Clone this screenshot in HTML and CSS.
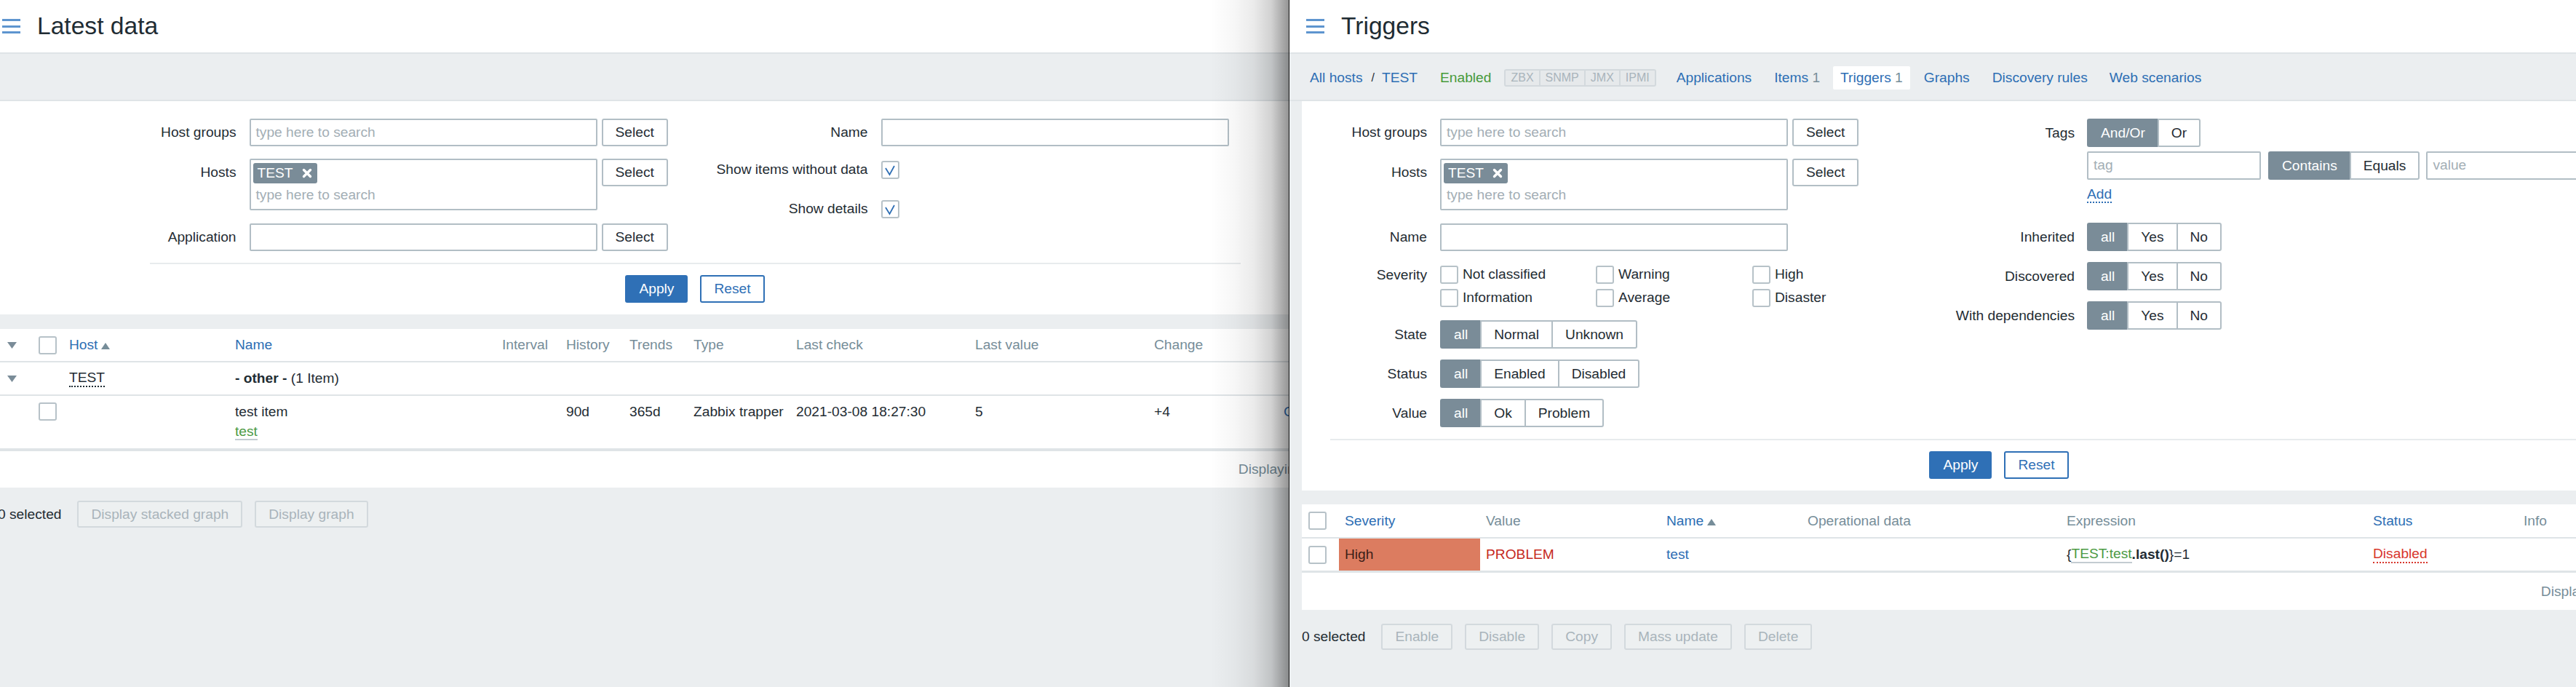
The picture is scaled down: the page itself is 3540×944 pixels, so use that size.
FILE: index.html
```html
<!DOCTYPE html>
<html>
<head>
<meta charset="utf-8">
<title>Zabbix</title>
<link rel="stylesheet" href="styles.css">
</head>
<body>
<div class="screen">
  <div class="win win-left">
    <div class="page page-left">
      <header class="head"><span class="burger"><i></i><i></i><i></i></span><h1>Latest data</h1></header>
      <div class="band"></div>
      <section class="filter">
        <div class="fform fform-l">
          <div class="fcols">
            <div class="fcol lcol1">
              <div class="frow"><div class="lbl">Host groups</div><div class="inp ph">type here to search</div><span class="btn">Select</span></div>
              <div class="frow mt17"><div class="lbl">Hosts</div><div class="multi"><span class="chip">TEST<svg width="14" height="14" viewBox="0 0 14 14"><path d="M2.5 2.5L11.5 11.5M11.5 2.5L2.5 11.5" stroke="#fff" stroke-width="3.4" stroke-linecap="round"/></svg></span><div class="ph mph">type here to search</div></div><span class="btn">Select</span></div>
              <div class="frow mt18"><div class="lbl">Application</div><div class="inp"></div><span class="btn">Select</span></div>
            </div>
            <div class="fcol lcol2">
              <div class="frow"><div class="lbl">Name</div><div class="inp"></div></div>
              <div class="frow frow-cb mt17"><div class="lbl">Show items without data</div><span class="cb"><svg width="21" height="21" viewBox="0 0 21 21"><polyline points="4,8 9.5,17 16,5" fill="none" stroke="#2d6eb4" stroke-width="1.8"/></svg></span></div>
              <div class="frow frow-cb mt24"><div class="lbl">Show details</div><span class="cb"><svg width="21" height="21" viewBox="0 0 21 21"><polyline points="4,8 9.5,17 16,5" fill="none" stroke="#2d6eb4" stroke-width="1.8"/></svg></span></div>
            </div>
          </div>
          <div class="fsep"></div>
          <div class="fbtns"><span class="btn btn-primary">Apply</span><span class="btn btn-outline">Reset</span></div>
        </div>
      </section>

      <div class="tbl tbl-l">
        <div class="tr th">
          <div class="tc tc-arrow"><svg width="13" height="9" viewBox="0 0 13 9"><polygon points="0,0 13,0 6.5,9" fill="#7a8c98"/></svg></div>
          <div class="tc"><span class="cb"></span></div>
          <div class="tc link">Host<svg class="sort" width="12" height="9" viewBox="0 0 12 9"><polygon points="0,9 6,0 12,9" fill="#768d99"/></svg></div>
          <div class="tc link">Name</div>
          <div class="tc">Interval</div>
          <div class="tc">History</div>
          <div class="tc">Trends</div>
          <div class="tc">Type</div>
          <div class="tc">Last check</div>
          <div class="tc">Last value</div>
          <div class="tc">Change</div>
          <div class="tc"></div>
        </div>
        <div class="tr tgroup">
          <div class="tc tc-arrow"><svg width="13" height="9" viewBox="0 0 13 9"><polygon points="0,0 13,0 6.5,9" fill="#7a8c98"/></svg></div>
          <div class="tc"></div>
          <div class="tc"><span class="dotted">TEST</span></div>
          <div class="tc"><b>- other -</b>&nbsp;(1 Item)</div>
          <div class="tc"></div><div class="tc"></div><div class="tc"></div><div class="tc"></div>
          <div class="tc"></div><div class="tc"></div><div class="tc"></div><div class="tc"></div>
        </div>
        <div class="tr titem">
          <div class="tc"></div>
          <div class="tc tc-cb"><span class="cb"></span></div>
          <div class="tc"></div>
          <div class="tc tc-name"><span>test item</span><span class="app">test</span></div>
          <div class="tc"></div>
          <div class="tc">90d</div>
          <div class="tc">365d</div>
          <div class="tc">Zabbix trapper</div>
          <div class="tc">2021-03-08 18:27:30</div>
          <div class="tc">5</div>
          <div class="tc">+4</div>
          <div class="tc link">Graph</div>
        </div>
        <div class="tfoot">Displaying 1 of 1 found</div>
      </div>

      <div class="actions">
        <span class="sel">0 selected</span>
        <span class="btn btn-dis">Display stacked graph</span>
        <span class="btn btn-dis">Display graph</span>
      </div>
    </div>
    <div class="shade"></div>
  </div>

  <div class="divider"></div>

  <div class="win win-right">
    <div class="page page-right">
      <header class="head"><span class="burger"><i></i><i></i><i></i></span><h1>Triggers</h1></header>
      <div class="band">
        <nav class="nav">
          <span class="link">All hosts</span>
          <span class="crumb-sep">/</span>
          <span class="link crumb-host">TEST</span>
          <span class="green nav-status">Enabled</span>
          <span class="avail"><span>ZBX</span><span>SNMP</span><span>JMX</span><span>IPMI</span></span>
          <span class="link nav-apps">Applications</span>
          <span class="link nav-item">Items <span class="cnt">1</span></span>
          <span class="link nav-tab">Triggers <span class="cnt">1</span></span>
          <span class="link nav-graphs">Graphs</span>
          <span class="link nav-item">Discovery rules</span>
          <span class="link nav-web">Web scenarios</span>
        </nav>
      </div>
      <section class="filter">
        <div class="fform fform-r">
          <div class="fcols">
            <div class="fcol rcol1">
              <div class="frow"><div class="lbl">Host groups</div><div class="inp ph">type here to search</div><span class="btn">Select</span></div>
              <div class="frow mt17"><div class="lbl">Hosts</div><div class="multi"><span class="chip">TEST<svg width="14" height="14" viewBox="0 0 14 14"><path d="M2.5 2.5L11.5 11.5M11.5 2.5L2.5 11.5" stroke="#fff" stroke-width="3.4" stroke-linecap="round"/></svg></span><div class="ph mph">type here to search</div></div><span class="btn">Select</span></div>
              <div class="frow mt18"><div class="lbl">Name</div><div class="inp"></div></div>
              <div class="frow mt19"><div class="lbl lbl-sev">Severity</div>
                <div class="sevgrid">
                  <span class="cbl"><span class="cb"></span>Not classified</span>
                  <span class="cbl"><span class="cb"></span>Warning</span>
                  <span class="cbl"><span class="cb"></span>High</span>
                  <span class="cbl"><span class="cb"></span>Information</span>
                  <span class="cbl"><span class="cb"></span>Average</span>
                  <span class="cbl"><span class="cb"></span>Disaster</span>
                </div>
              </div>
              <div class="frow mt18"><div class="lbl lbl-seg">State</div><div class="seg"><span class="on">all</span><span>Normal</span><span>Unknown</span></div></div>
              <div class="frow mt15"><div class="lbl lbl-seg">Status</div><div class="seg"><span class="on">all</span><span>Enabled</span><span>Disabled</span></div></div>
              <div class="frow mt15"><div class="lbl lbl-seg">Value</div><div class="seg"><span class="on">all</span><span>Ok</span><span>Problem</span></div></div>
            </div>
            <div class="fcol rcol2">
              <div class="frow"><div class="lbl lbl-seg">Tags</div><div class="seg"><span class="on">And/Or</span><span>Or</span></div></div>
              <div class="frow mt6"><div class="lbl lbl-seg"></div><div class="inp inp-sm ph">tag</div><div class="seg seg-op"><span class="on">Contains</span><span>Equals</span></div><div class="inp inp-sm inp-val ph">value</div></div>
              <div class="frow mt10"><div class="lbl lbl-add"></div><span class="add">Add</span></div>
              <div class="frow mt27"><div class="lbl lbl-seg">Inherited</div><div class="seg"><span class="on">all</span><span>Yes</span><span>No</span></div></div>
              <div class="frow mt15"><div class="lbl lbl-seg">Discovered</div><div class="seg"><span class="on">all</span><span>Yes</span><span>No</span></div></div>
              <div class="frow mt15"><div class="lbl lbl-seg">With dependencies</div><div class="seg"><span class="on">all</span><span>Yes</span><span>No</span></div></div>
            </div>
          </div>
          <div class="fsep"></div>
          <div class="fbtns"><span class="btn btn-primary">Apply</span><span class="btn btn-outline">Reset</span></div>
        </div>
      </section>

      <div class="tbl tbl-r">
        <div class="tr th">
          <div class="tc tc-first"><span class="cb"></span></div>
          <div class="tc link">Severity</div>
          <div class="tc">Value</div>
          <div class="tc link">Name<svg class="sort" width="12" height="9" viewBox="0 0 12 9"><polygon points="0,9 6,0 12,9" fill="#768d99"/></svg></div>
          <div class="tc">Operational data</div>
          <div class="tc">Expression</div>
          <div class="tc link">Status</div>
          <div class="tc">Info</div>
        </div>
        <div class="tr tdata">
          <div class="tc tc-first"><span class="cb"></span></div>
          <div class="tc sev-high">High</div>
          <div class="tc problem">PROBLEM</div>
          <div class="tc link">test</div>
          <div class="tc"></div>
          <div class="tc">{<span class="expr-host">TEST:test</span><b>.last()</b>}=1</div>
          <div class="tc"><span class="dis">Disabled</span></div>
          <div class="tc"></div>
        </div>
        <div class="tfoot tfoot-r">Displaying 1 of 1 found</div>
      </div>

      <div class="actions actions-r">
        <span class="sel">0 selected</span>
        <span class="btn btn-dis">Enable</span>
        <span class="btn btn-dis">Disable</span>
        <span class="btn btn-dis">Copy</span>
        <span class="btn btn-dis">Mass update</span>
        <span class="btn btn-dis">Delete</span>
      </div>
    </div>
  </div>
</div>
</body>
</html>
```

FILE: styles.css
```css
* { box-sizing: border-box; }
html, body { margin: 0; padding: 0; }
body {
  width: 3540px; height: 944px; overflow: hidden;
  font-family: "Liberation Sans", Arial, sans-serif;
  font-size: 19.2px; color: #1f2c33; background: #ebeef0;
}
.screen { display: flex; width: 3540px; height: 944px; }
.win { position: relative; height: 944px; overflow: hidden; background: #ebeef0; flex: none; }
.win-left { width: 1771px; }
.win-right { width: 1768px; }
.divider { width: 1px; flex: none; background: #111; }
.page { width: 1950px; flex: none; }
.page-left { margin-left: -20px; }

.shade {
  position: absolute; top: 0; right: 0; width: 108px; height: 944px;
  background: linear-gradient(to right, rgba(0,0,0,0) 0%, rgba(0,0,0,0.03) 30%, rgba(0,0,0,0.08) 55%, rgba(0,0,0,0.18) 78%, rgba(0,0,0,0.42) 100%);
}

/* header */
.head { height: 74px; background: #fff; display: flex; align-items: center; padding-left: 23px; border-bottom: 2px solid #dfe4e7; }
.burger { width: 25px; height: 20px; display: flex; flex-direction: column; justify-content: space-between; margin-right: 23px; }
.burger i { display: block; height: 3px; background: #5e95cf; }
.head h1 { margin: 0; font-size: 33.6px; font-weight: normal; line-height: 1; color: #1f2c33; }

.band { height: 65px; border-bottom: 2px solid #dfe4e7; }

/* nav */
.nav { display: flex; align-items: center; height: 63px; padding-left: 28px; padding-top: 3px; white-space: nowrap; }
.link { color: #2d6eb4; }
.green { color: #479a3a; }
.cnt { color: #768d99; }
.crumb-sep { color: #1f2c33; margin-left: 12px; font-size: 16px; }
.crumb-host { margin-left: 10px; }
.nav-status { margin-left: 31px; }
.avail { display: flex; margin-left: 18px; height: 24px; border: 2px solid #d3d9dd; border-radius: 3px; background: #e6e9eb; font-size: 16px; color: #a9b4bb; }
.avail span { padding: 0 7px; line-height: 20px; border-left: 2px solid #d3d9dd; }
.avail span:first-child { border-left: 0; }
.nav-apps { margin-left: 28px; }
.nav-item { margin-left: 31px; }
.nav-tab { margin-left: 18px; padding: 0 10px; height: 32px; line-height: 32px; background: #fff; border-radius: 2px; }
.nav-graphs { margin-left: 19px; }
.nav-web { margin-left: 30px; }

/* filter */
.filter { background: #fff; margin: 0 17px; padding: 24px 0 16px; }
.fform-l { width: 1499px; margin: 0 auto; }
.fform-r { width: 1838px; margin: 0 auto; }
.fcols { display: flex; align-items: flex-start; }
.lcol1 { width: 749px; }
.lcol2 { flex: 1; }
.rcol1 { width: 828px; }
.rcol2 { flex: 1; }
.frow { display: flex; align-items: flex-start; }
.mt6 { margin-top: 6px; } .mt10 { margin-top: 10px; } .mt15 { margin-top: 15px; }
.mt17 { margin-top: 17px; } .mt18 { margin-top: 18px; } .mt19 { margin-top: 19px; }
.mt24 { margin-top: 24px; } .mt27 { margin-top: 27px; }
.lbl { flex: none; text-align: right; padding-right: 18px; line-height: 38px; white-space: nowrap; }
.lcol1 .lbl { width: 137px; }
.lcol2 .lbl { width: 256px; }
.rcol1 .lbl { width: 151px; }
.rcol2 .lbl { width: 212px; padding-right: 17px; }
.lbl-seg { line-height: 39px; }
.lbl-sev { line-height: 27px; }
.lbl-add { line-height: 20px; }
.frow-cb { align-items: center; height: 30px; }
.frow-cb .lbl { line-height: 30px; }

.inp { width: 478px; height: 38px; border: 2px solid #b2bec5; border-radius: 2px; padding: 0 7px; line-height: 34px; background: #fff; white-space: nowrap; }
.inp-sm { width: 239px; height: 39px; }
.inp-val { margin-left: 9px; }
.ph { color: #a3aeb5; }
.multi { width: 478px; height: 71px; border: 2px solid #b2bec5; border-radius: 2px; padding: 4px 3px; }
.chip { display: inline-flex; align-items: center; gap: 12px; height: 28px; padding: 0 7px 0 6px; background: #7a8c98; color: #fff; border-radius: 3px; }
.mph { line-height: 22px; margin-top: 5px; padding-left: 4px; }

.btn { display: inline-flex; align-items: center; height: 38px; padding: 0 17px; border: 2px solid #b2bec5; border-radius: 3px; background: #fff; color: #1f2c33; white-space: nowrap; flex: none; }
.frow .btn { margin-left: 6px; }
.btn-primary { background: #2f70b6; border-color: #2f70b6; color: #fff; }
.btn-outline { border-color: #2f70b6; color: #2f70b6; }

.cb { display: inline-flex; align-items: center; justify-content: center; width: 25px; height: 25px; border: 2px solid #b7c2c8; border-radius: 3px; background: #fff; flex: none; }
.cb svg { display: block; }

.sevgrid { display: grid; grid-template-columns: 214px 215px auto; row-gap: 6px; }
.cbl { display: flex; align-items: center; gap: 6px; height: 26px; white-space: nowrap; }

.seg { display: inline-flex; height: 39px; flex: none; }
.seg span { display: flex; align-items: center; padding: 0 17px; border: 2px solid #b2bec5; border-right: 0; background: #fff; white-space: nowrap; }
.seg span:first-child { border-radius: 3px 0 0 3px; }
.seg span:last-child { border-right: 2px solid #b2bec5; border-radius: 0 3px 3px 0; }
.seg span.on { background: #7a8c98; border-color: #7a8c98; color: #fff; }
.seg-op { margin-left: 10px; }
.add { color: #2d6eb4; line-height: 20px; border-bottom: 2px dotted #2d6eb4; }

.fsep { height: 2px; background: #e8ebed; margin-top: 16px; }
.fbtns { display: flex; justify-content: center; gap: 17px; margin-top: 15px; }

/* tables */
.tbl { background: #fff; margin: 20px 17px 0; }
.tbl-r { margin-top: 19px; }
.tr { display: grid; align-items: stretch; border-bottom: 2px solid #dfe4e7; }
.tc { display: flex; align-items: center; white-space: nowrap; overflow: hidden; min-width: 0; }
.th .tc { color: #768d99; }
.th .tc.link { color: #2d6eb4; }
.sort { margin-left: 5px; margin-top: 3px; }

.tbl-l .tr { grid-template-columns: 56px 42px 228px 367px 88px 87px 88px 141px 246px 246px 178px 1fr; height: 46px; }
.tc-arrow { padding-left: 13px; }
.tgroup b { font-weight: bold; }
.dotted { border-bottom: 2px dotted #1f2c33; line-height: 22px; }
.tbl-l .titem { height: 76px; border-bottom-width: 4px; align-items: start; }
.titem .tc { padding-top: 11px; line-height: 22px; }
.titem .tc-cb { padding-top: 9px; }
.tc-name { flex-direction: column; align-items: flex-start; }
.app { color: #4c9a44; margin-top: 6px; border-bottom: 2px solid #c3ccd1; line-height: 20px; }
.tfoot { height: 50px; display: flex; align-items: center; justify-content: flex-end; padding-right: 16px; color: #768d99; }
.tfoot-r { height: 51px; padding-right: 18px; }

.tbl-r .tr { grid-template-columns: 51px 194px 248px 194px 356px 421px 207px 1fr; height: 47px; }
.tbl-r .tc { padding-left: 8px; }
.tbl-r .tc-first { padding-left: 9px; }
.tbl-r .tdata { border-bottom-width: 3px; }
.sev-high { background: #dc7c60; color: #3c2018; }
.problem { color: #c62a1e; }
.expr-host { color: #4c9a44; border-bottom: 2px solid #c3ccd1; line-height: 22px; }
.tdata b { font-weight: bold; }
.dis { color: #d8362c; border-bottom: 2px dotted #d8362c; line-height: 22px; }

/* actions */
.actions { display: flex; align-items: center; padding-left: 17px; margin-top: 18px; }
.actions-r { margin-top: 19px; }
.sel { color: #1f2c33; margin-right: 22px; white-space: nowrap; }
.btn-dis { height: 37px; background: #edf0f1; border-color: #d3d9dd; color: #a9b4bb; margin-right: 17px; }
.actions-r .btn-dis { height: 36px; }
```
